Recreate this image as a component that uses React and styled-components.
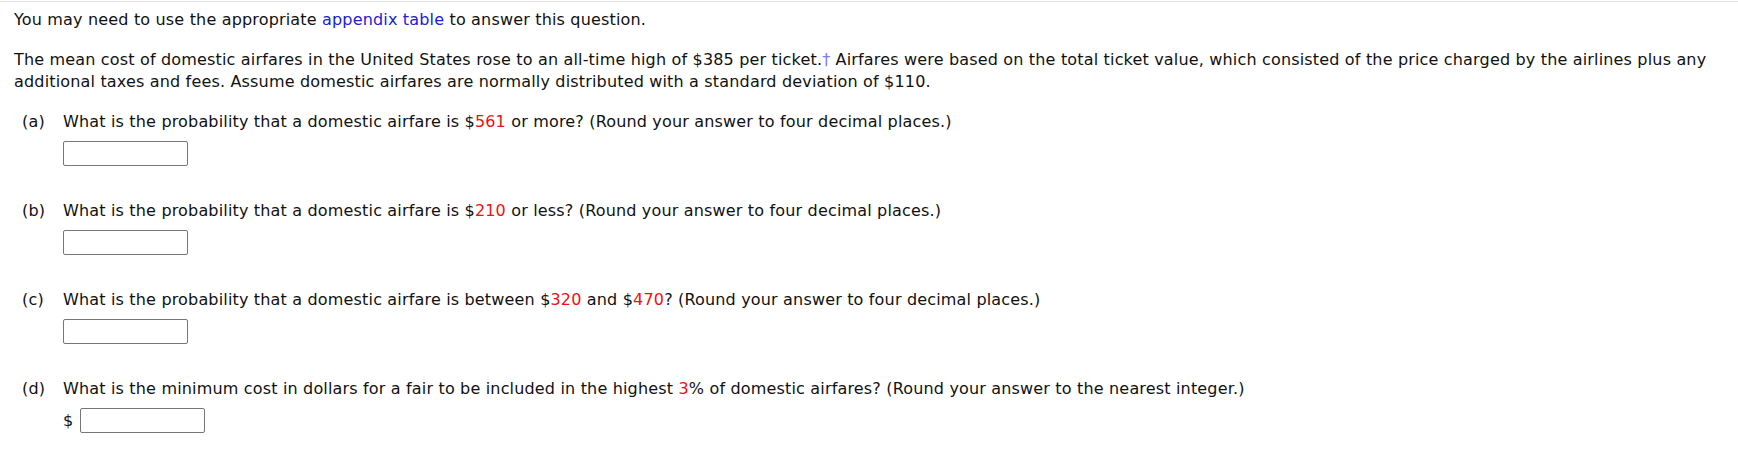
import React from "react";
import styled, { createGlobalStyle } from "styled-components";

const GlobalStyle = createGlobalStyle`
  body {
    margin: 0;
    background: #fff;
    font-family: "DejaVu Sans", Verdana, sans-serif;
    color: #111;
  }
`;

const Page = styled.div`
  margin-top: 1px;
  border-top: 1px solid #e3e3e3;
  padding: 7px 14px 20px 14px;
  font-size: 16px;
  line-height: 22px;
  letter-spacing: 0.17px;
`;

const Para = styled.p`
  margin: 0 0 18px 0;
`;

const Link = styled.a`
  color: #2020d8;
  text-decoration: none;
  cursor: pointer;
`;

const Dagger = styled.a`
  color: #7d78ff;
  text-decoration: none;
`;

const Num = styled.span`
  color: #ee1111;
`;

const Part = styled.div`
  padding-left: 8px;
  margin-bottom: ${(p) => (p.last ? "0" : "34px")};
`;

const QuestionRow = styled.div`
  display: flex;
`;

const Label = styled.span`
  width: 41px;
  flex-shrink: 0;
`;

const AnswerRow = styled.div`
  display: flex;
  align-items: center;
  gap: 7px;
  margin-top: 8px;
  padding-left: 41px;
`;

const Unit = styled.span`
  font-size: 16px;
`;

const AnswerBox = styled.input`
  box-sizing: border-box;
  width: 125px;
  height: 25px;
  margin: 0;
  border: 1px solid #767676;
  border-radius: 2px;
  background: #fff;
  font: inherit;
  padding: 0 4px;
`;

const parts = [
  {
    id: "a",
    text: (
      <>
        What is the probability that a domestic airfare is $<Num>561</Num> or
        more? (Round your answer to four decimal places.)
      </>
    ),
  },
  {
    id: "b",
    text: (
      <>
        What is the probability that a domestic airfare is $<Num>210</Num> or
        less? (Round your answer to four decimal places.)
      </>
    ),
  },
  {
    id: "c",
    text: (
      <>
        What is the probability that a domestic airfare is between $
        <Num>320</Num> and $<Num>470</Num>? (Round your answer to four decimal
        places.)
      </>
    ),
  },
  {
    id: "d",
    unit: "$",
    text: (
      <>
        What is the minimum cost in dollars for a fair to be included in the
        highest <Num>3</Num>% of domestic airfares? (Round your answer to the
        nearest integer.)
      </>
    ),
  },
];

const App = () => {
  return (
    <>
      <GlobalStyle />
      <Page>
        <Para>
          You may need to use the appropriate <Link>appendix table</Link> to
          answer this question.
        </Para>
        <Para>
          The mean cost of domestic airfares in the United States rose to an
          all-time high of $385 per ticket.<Dagger>†</Dagger> Airfares were
          based on the total ticket value, which consisted of the price charged
          by the airlines plus any additional taxes and fees. Assume domestic
          airfares are normally distributed with a standard deviation of $110.
        </Para>
        {parts.map((p, i) => (
          <Part key={p.id} last={i === parts.length - 1}>
            <QuestionRow>
              <Label>({p.id})</Label>
              <span>{p.text}</span>
            </QuestionRow>
            <AnswerRow>
              {p.unit && <Unit>{p.unit}</Unit>}
              <AnswerBox type="text" />
            </AnswerRow>
          </Part>
        ))}
      </Page>
    </>
  );
};

export default App;
